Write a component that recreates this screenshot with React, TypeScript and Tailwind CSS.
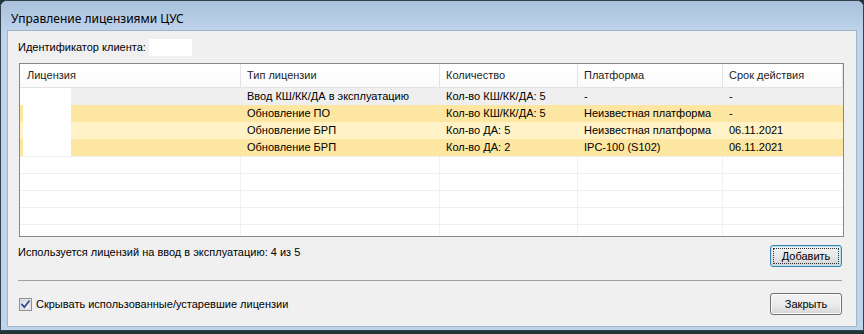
import React from "react";

const rows = [
  { bg: "bg-[#efefef]", first: true, type: "Ввод КШ/КК/ДА в эксплуатацию", qty: "Кол-во КШ/КК/ДА: 5", plat: "-", exp: "-" },
  { bg: "bg-[#fde6a1]", first: false, type: "Обновление ПО", qty: "Кол-во КШ/КК/ДА: 5", plat: "Неизвестная платформа", exp: "-" },
  { bg: "bg-[#fef2c6]", first: false, type: "Обновление БРП", qty: "Кол-во ДА: 5", plat: "Неизвестная платформа", exp: "06.11.2021" },
  { bg: "bg-[#fde6a1]", first: false, type: "Обновление БРП", qty: "Кол-во ДА: 2", plat: "IPC-100 (S102)", exp: "06.11.2021" },
];

const headers = ["Лицензия", "Тип лицензии", "Количество", "Платформа", "Срок действия"];

export default function App() {
  return (
    <div className="w-[864px] h-[334px] bg-[#1e3638] overflow-hidden font-['Liberation_Sans',sans-serif] text-[11px] text-black">
      <div className="w-[864px] h-[331px] rounded-t-[7px] border border-[#34404c] bg-[#bed4eb] flex flex-col px-[6px] pb-[3px] overflow-hidden">
        <div className="h-[29px] -mx-[6px] px-[10px] bg-gradient-to-b from-[#a9c1db] to-[#bdd3ea] flex items-end pb-[3px]">
          <span className="font-['Noto_Sans',sans-serif] text-[12px] leading-[16px] text-black">Управление лицензиями ЦУС</span>
        </div>
        <div className="flex-1 border border-[#9fb3c9] bg-[#f0f0f0] flex flex-col pl-[10px] pr-[12px] pt-[8px]">
          <div className="h-[16px] flex items-center">
            <span className="leading-[13px]">Идентификатор клиента:</span>
            <div className="ml-[3px] w-[43px] h-[17px] bg-white"></div>
          </div>

          <div className="mt-[8px] ml-[1px] h-[174px] border border-[#828790] bg-white flex flex-col overflow-hidden">
            <div className="h-[24px] flex border-b border-[#e3e3e3] bg-gradient-to-b from-white to-[#fbfbfb] shrink-0">
              {headers.map((h, i) => (
                <div
                  key={h}
                  className={
                    "h-full flex items-center pl-[6px] border-r border-[#e3e3e3] " +
                    (i === 0 ? "w-[221px] pl-[7px]" : i === 1 ? "w-[199px]" : i === 2 ? "w-[138px]" : i === 3 ? "w-[145px]" : "w-[120px]")
                  }
                >
                  <span className="leading-[13px] text-[#1e1e1e]">{h}</span>
                </div>
              ))}
            </div>
            {rows.map((r, idx) => (
              <div key={idx} className={"h-[17px] flex shrink-0 " + r.bg}>
                <div className="w-[221px] h-full flex">
                  <div className={r.first ? "w-[51px] h-full bg-white" : "ml-[3px] w-[48px] h-full bg-white"}></div>
                </div>
                <div className="w-[199px] h-full flex items-center pl-[6px]"><span className="leading-[13px] whitespace-nowrap">{r.type}</span></div>
                <div className="w-[138px] h-full flex items-center pl-[6px]"><span className="leading-[13px] whitespace-nowrap">{r.qty}</span></div>
                <div className="w-[145px] h-full flex items-center pl-[6px]"><span className="leading-[13px] whitespace-nowrap">{r.plat}</span></div>
                <div className="w-[120px] h-full flex items-center pl-[6px]"><span className="leading-[13px] whitespace-nowrap">{r.exp}</span></div>
              </div>
            ))}
            {[0, 1, 2, 3, 4, 5].map((k) => (
              <div key={"e" + k} className="h-[17px] flex shrink-0 border-t border-[#f0f0f0]">
                <div className="w-[221px] h-full border-r border-[#f0f0f0]"></div>
                <div className="w-[199px] h-full border-r border-[#f0f0f0]"></div>
                <div className="w-[138px] h-full border-r border-[#f0f0f0]"></div>
                <div className="w-[145px] h-full border-r border-[#f0f0f0]"></div>
                <div className="w-[120px] h-full"></div>
              </div>
            ))}
          </div>

          <div className="mt-[8px] h-[22px] flex items-start justify-between">
            <span className="leading-[13px] mt-[1px]">Используется лицензий на ввод в эксплуатацию: 4 из 5</span>
            <button className="mr-[2px] w-[72px] h-[22px] rounded-[3px] border border-[#3c7fb1] bg-gradient-to-b from-[#f4f4f4] via-[#e8e8e8] to-[#d4d4d4] shadow-[inset_0_0_0_1px_#b6e2f6] p-[2px] flex">
              <span className="flex-1 border border-dotted border-[#303030] flex items-center justify-center leading-[13px] text-[11px] font-['Liberation_Sans',sans-serif]">Добавить</span>
            </button>
          </div>

          <div className="mt-[13px] mr-[2px] h-[1px] bg-[#a0a0a0] shrink-0"></div>

          <div className="mt-[12px] h-[22px] flex items-center justify-between">
            <div className="flex items-center ml-[1px]">
              <svg width="13" height="13" viewBox="0 0 13 13" className="shrink-0">
                <defs>
                  <linearGradient id="cb" x1="0" y1="0" x2="1" y2="1">
                    <stop offset="0" stopColor="#dcdcdc" />
                    <stop offset="1" stopColor="#fbfbfb" />
                  </linearGradient>
                </defs>
                <rect x="0.5" y="0.5" width="12" height="12" fill="#f4f4f4" stroke="#8e8f8f" />
                <rect x="2" y="2" width="9" height="9" fill="url(#cb)" stroke="#b8bec6" strokeWidth="0.6" />
                <path d="M3 6.5 L5.3 9.2 L10 3.2" fill="none" stroke="#36448f" strokeWidth="1.8" strokeLinecap="round" strokeLinejoin="round" />
              </svg>
              <span className="ml-[4px] leading-[13px]">Скрывать использованные/устаревшие лицензии</span>
            </div>
            <button className="mr-[2px] w-[72px] h-[22px] rounded-[3px] border border-[#707070] bg-gradient-to-b from-[#f3f3f3] via-[#ebebeb] to-[#d6d6d6] shadow-[inset_0_0_0_1px_#fcfcfc] flex items-center justify-center leading-[13px] text-[11px] font-['Liberation_Sans',sans-serif]">
              Закрыть
            </button>
          </div>
        </div>
      </div>
    </div>
  );
}
